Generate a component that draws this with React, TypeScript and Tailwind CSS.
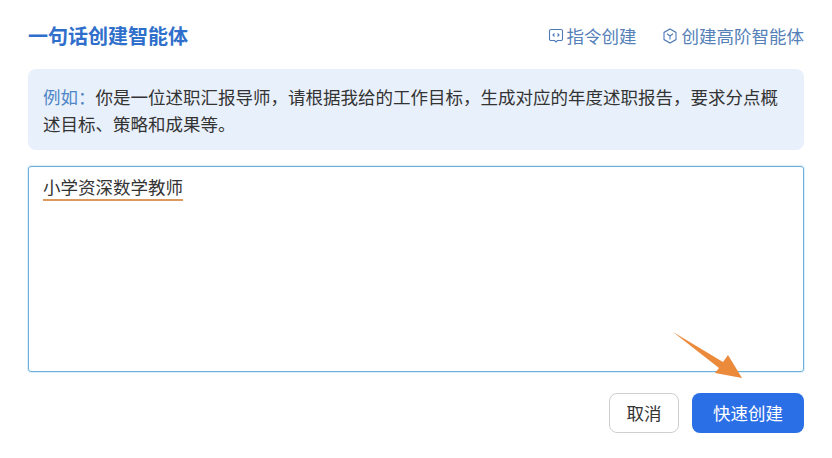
export default function App() {
  return (
    <div
      className="relative w-[832px] h-[458px] bg-white overflow-hidden px-7 pt-6 [text-spacing-trim:space-all]"
      style={{ fontFamily: '"Noto Sans CJK SC", "Liberation Sans", sans-serif' }}
    >
      {/* header */}
      <div className="flex items-center justify-between h-6">
        <h1 className="text-[20px] font-bold text-[#2f6fcb] leading-6">一句话创建智能体</h1>
        <div className="flex items-center gap-[24px] text-[17.500px] font-normal text-[#5580b8]">
          <span className="flex items-center gap-[3px] -translate-x-px">
            <svg width="16" height="16" viewBox="0 0 16 16" fill="none" stroke="#4f7ab8" strokeWidth="1.100">
              <path d="M3 1.500h10a1.500 1.500 0 0 1 1.500 1.500v8a1.500 1.500 0 0 1-1.500 1.500H9.500L8 14l-1.500-1.500H3A1.500 1.500 0 0 1 1.500 11V3A1.500 1.500 0 0 1 3 1.500z" />
              <path d="M6.500 5.500 5 7l1.500 1.500M9.500 5.500 11 7 9.500 8.500" />
            </svg>
            指令创建
          </span>
          <span className="flex items-center gap-[4px]">
            <svg width="16" height="16" viewBox="0 0 16 16" fill="none" stroke="#4f7ab8" strokeWidth="1.100">
              <path d="M8 1 14 4.400v7.200L8 15 2 11.600V4.400z" />
              <path d="M5 5.800 8 8l3-2.200M8 8v3.400" />
            </svg>
            创建高阶智能体
          </span>
        </div>
      </div>

      {/* example box */}
      <div className="mt-[21px] h-[81px] rounded-lg bg-[#e8f0fb] px-[15px] py-[14px] text-[17.500px] leading-[27px] text-[#333]">
        <span className="text-[#4f86c6]">例如：</span>
        你是一位述职汇报导师，请根据我给的工作目标，生成对应的年度述职报告，要求分点概述目标、策略和成果等。
      </div>

      {/* input */}
      <div className="mt-4 h-[206px] rounded-[3px] border border-[#6bb0dc] shadow-[0_0_0_1px_#dff0fb] px-[14px] py-[7px] text-[17.500px] leading-6 text-[#333]">
        <span className="inline-block border-b-2 border-[#dd9a5f] leading-[25px]">小学资深数学教师</span>
      </div>

      {/* buttons */}
      <div className="mt-[21px] flex justify-end gap-[13px]">
        <button className="w-[70px] h-10 rounded-lg border border-[#cfcfcf] bg-white text-[17.500px] text-[#333]">取消</button>
        <button className="w-[112px] h-10 rounded-lg bg-[#2b6fe6] text-[17.500px] text-white">快速创建</button>
      </div>

      {/* annotation arrow */}
      <svg className="absolute left-[670px] top-[330px]" width="76" height="52" viewBox="0 0 76 52">
        <path d="M3 2 L53 32 L58 25 L72 48 L45 43 L49 38 Z" fill="#ec8a3c" />
      </svg>
    </div>
  );
}
